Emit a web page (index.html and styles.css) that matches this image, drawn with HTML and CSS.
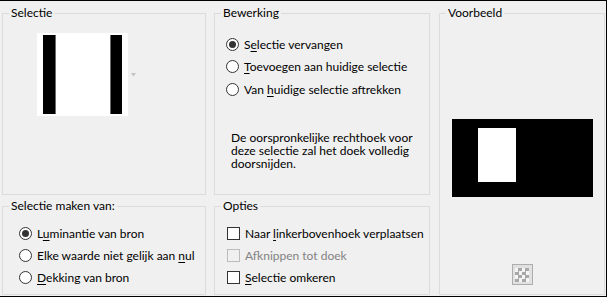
FILE: index.html
```html
<!DOCTYPE html>
<html lang="nl">
<head>
  <meta charset="UTF-8" />
  <title>Selectie maken van masker</title>
  <link rel="stylesheet" href="styles.css">
</head>
<body>

  <div class="dialog">

    <fieldset class="group sel">
      <legend>Selectie</legend>
      <div class="sel-body">
        <div class="sel-thumb">
          <span class="bar bar-left"></span>
          <span class="bar bar-right"></span>
        </div>
        <span class="drop-arrow"></span>
      </div>
    </fieldset>

    <fieldset class="group edit">
      <legend>Bewerking</legend>
      <div class="options">
        <label class="opt"><span class="radio checked"></span><span>S<u>e</u>lectie vervangen</span></label>
        <label class="opt"><span class="radio"></span><span><u>T</u>oevoegen aan huidige selectie</span></label>
        <label class="opt"><span class="radio"></span><span>Van <u>h</u>uidige selectie aftrekken</span></label>
      </div>
      <p class="note">De oorspronkelijke rechthoek voor<br>deze selectie zal het doek volledig<br>doorsnijden.</p>
    </fieldset>

    <fieldset class="group preview">
      <legend>Voorbeeld</legend>
      <div class="preview-body">
        <div class="canvas"><span class="canvas-sel"></span></div>
        <button class="bg-btn" type="button"><span class="checker"></span></button>
      </div>
    </fieldset>

    <fieldset class="group source">
      <legend>Selectie maken van:</legend>
      <div class="options">
        <label class="opt"><span class="radio checked"></span><span>L<u>u</u>minantie van bron</span></label>
        <label class="opt"><span class="radio"></span><span>Elke waarde niet gelijk aan <u>n</u>ul</span></label>
        <label class="opt"><span class="radio"></span><span><u>D</u>ekking van bron</span></label>
      </div>
    </fieldset>

    <fieldset class="group opts">
      <legend>Opties</legend>
      <div class="options">
        <label class="opt"><span class="check"></span><span>Naar <u>l</u>inkerbovenhoek verplaatsen</span></label>
        <label class="opt disabled"><span class="check"></span><span>Af<u>k</u>nippen tot doek</span></label>
        <label class="opt"><span class="check"></span><span><u>S</u>electie omkeren</span></label>
      </div>
    </fieldset>

  </div>

</body>
</html>
```

FILE: styles.css
```css
body {
  margin: 0;
  font-family: Lato, "Noto Sans", sans-serif;
  font-size: 12px;
  color: #000;
  background: #f0f0f0;
}

.dialog {
  width: 607px;
  height: 297px;
  box-sizing: border-box;
  border-top: 1px solid #000;
  border-right: 1px solid #000;
  border-bottom: 1px solid #000;
  padding: 5px 0 1px 2px;
  display: grid;
  grid-template-columns: 204px 216px 167px;
  grid-template-rows: 189px 96px;
  column-gap: 8px;
  row-gap: 4px;
}

/* group boxes */
.group {
  margin: 0;
  padding: 0;
  min-width: 0;
  border: 1px solid #dcdcdc;
}

.group legend {
  margin-left: 6px;
  padding: 0 2px;
  line-height: 14px;
}

.sel { grid-column: 1; grid-row: 1; }
.edit { grid-column: 2; grid-row: 1; }
.preview { grid-column: 3; grid-row: 1 / 3; margin-left: 1px; }
.source { grid-column: 1; grid-row: 2; }
.opts { grid-column: 2; grid-row: 2; }

/* selectie thumbnail */
.sel-body {
  display: flex;
  align-items: center;
  margin: 13px 0 0 34px;
}

.sel-thumb {
  width: 91px;
  height: 83px;
  box-sizing: border-box;
  padding: 2px 6px;
  background: #fff;
  display: flex;
  justify-content: space-between;
}

.bar {
  background: #000;
}

.bar-left {
  width: 12px;
  border-right: 1px solid #6a6a6a;
}

.bar-right {
  width: 11px;
  border-left: 1px solid #6a6a6a;
}

.drop-arrow {
  width: 1px;
  height: 0;
  margin-left: 3px;
  border-left: 2px solid transparent;
  border-right: 2px solid transparent;
  border-top: 3px solid #c4c4c4;
}

/* radio / checkbox rows */
.options {
  display: flex;
  flex-direction: column;
}

.edit .options {
  padding: 13px 0 0 11px;
}

.source .options {
  padding: 9px 0 0 16px;
}

.opts .options {
  padding: 9px 0 0 12px;
}

.opt {
  height: 22px;
  display: flex;
  align-items: center;
  white-space: nowrap;
}

.edit .opt {
  height: 22.5px;
}

.opt u {
  text-decoration-thickness: 1px;
  text-underline-offset: 2px;
}

.radio {
  width: 13px;
  height: 13px;
  box-sizing: border-box;
  margin-right: 5px;
  border: 1px solid #333;
  border-radius: 50%;
  background: #fff;
  display: flex;
  align-items: center;
  justify-content: center;
}

.radio.checked::after {
  content: "";
  width: 7px;
  height: 7px;
  border-radius: 50%;
  background: #333;
}

.check {
  width: 13px;
  height: 13px;
  box-sizing: border-box;
  margin-right: 5px;
  border: 1px solid #333;
  background: #fff;
}

.disabled {
  color: #838383;
}

.disabled .check {
  border-color: #bcbcbc;
  background: transparent;
}

.note {
  margin: 30px 0 0 16px;
  line-height: 13px;
}

/* voorbeeld */
.preview-body {
  display: flex;
  flex-direction: column;
  align-items: center;
}

.canvas {
  width: 141px;
  height: 78px;
  box-sizing: border-box;
  margin-top: 99px;
  padding: 9px 0 0 26px;
  background: #000;
}

.canvas-sel {
  display: block;
  width: 38px;
  height: 54px;
  background: #fff;
}

.bg-btn {
  width: 21px;
  height: 21px;
  margin-top: 67px;
  padding: 0;
  border: 1px solid #adadad;
  background: #e1e1e1;
  display: flex;
  align-items: center;
  justify-content: center;
}

.checker {
  width: 14px;
  height: 14px;
  background: repeating-conic-gradient(#a8a8a8 0 25%, #f4f4f4 0 50%) 0 0 / 7px 7px;
}
```
